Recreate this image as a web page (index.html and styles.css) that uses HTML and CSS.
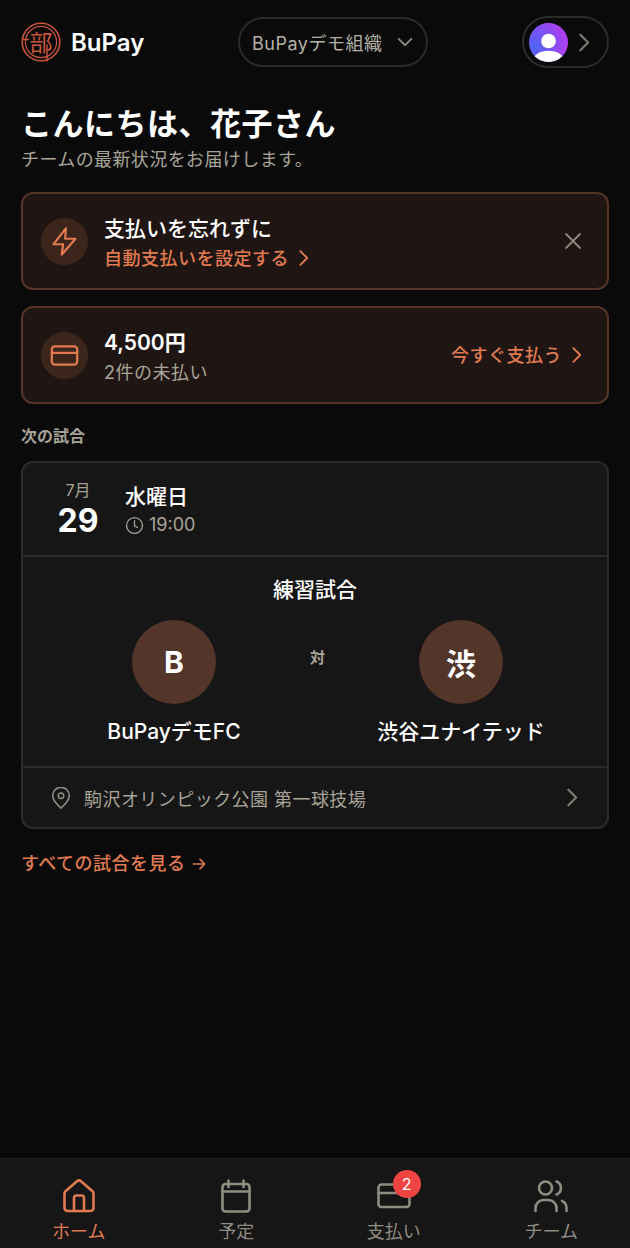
FILE: index.html
```html
<!DOCTYPE html>
<html lang="ja">
<head>
  <meta charset="UTF-8">
  <title>BuPay</title>
  <meta name="viewport" content="width=device-width, initial-scale=1.0">
  <link rel="stylesheet" href="styles.css">
</head>
<body>
  <header class="topbar">
    <div class="brand">
      <svg class="brand-seal" viewBox="0 0 40 40">
        <circle cx="20" cy="20" r="18.8"/>
        <circle cx="20" cy="20" r="15.6" stroke-width="1.2"/>
        <path d="M1.5 17.5h6M26 23v16" stroke-width="1.4"/>
        <text x="20" y="28.5" text-anchor="middle">部</text>
      </svg>
      <span class="brand-name">BuPay</span>
    </div>
    <button class="org-pill">
      <span>BuPayデモ組織</span>
      <svg class="org-caret" viewBox="0 0 24 24"><path d="M5 8.5l7 7 7-7"/></svg>
    </button>
    <button class="user-pill">
      <span class="avatar">
        <svg viewBox="0 0 40 40"><circle cx="20" cy="18.500" r="7.500" fill="#fff"/><ellipse cx="20" cy="38.500" rx="16" ry="10" fill="#fff"/></svg>
      </span>
      <svg class="chev chev-muted" viewBox="0 0 24 24"><path d="M8 4.5l7.5 7.5L8 19.5"/></svg>
    </button>
  </header>

  <main class="content">
    <section class="greeting">
      <h1>こんにちは、花子さん</h1>
      <p>チームの最新状況をお届けします。</p>
    </section>

    <!-- お知らせ -->
    <div class="notice">
      <span class="notice-icon">
        <svg class="icon-bolt" viewBox="0 0 24 24"><path d="M13 2.5L4 14h7l-1 7.5L20 10h-7.5z"/></svg>
      </span>
      <div class="notice-body">
        <strong>支払いを忘れずに</strong>
        <a class="link-accent">自動支払いを設定する<svg class="chev" viewBox="0 0 24 24"><path d="M8 4.5l7.5 7.5L8 19.5"/></svg></a>
      </div>
      <svg class="notice-close" viewBox="0 0 24 24"><path d="M4.5 4.5l15 15M19.5 4.5l-15 15"/></svg>
    </div>

    <div class="notice">
      <span class="notice-icon">
        <svg class="icon-card" viewBox="0 0 24 24"><rect x="1.5" y="4.5" width="21" height="15" rx="2.5"/><path d="M1.5 9.8h21"/></svg>
      </span>
      <div class="notice-body">
        <strong class="amount">4,500円</strong>
        <span class="notice-sub">2件の未払い</span>
      </div>
      <a class="link-accent pay-now">今すぐ支払う<svg class="chev" viewBox="0 0 24 24"><path d="M8 4.5l7.5 7.5L8 19.5"/></svg></a>
    </div>

    <h2 class="section-title">次の試合</h2>

    <div class="match-card">
      <div class="match-date">
        <div class="date-box">
          <span class="date-month">7月</span>
          <span class="date-day">29</span>
        </div>
        <div class="date-info">
          <strong>水曜日</strong>
          <span class="date-time">
            <svg viewBox="0 0 24 24"><circle cx="12" cy="12" r="10"/><path d="M12 6v6.5l3.8 2"/></svg>
            19:00
          </span>
        </div>
      </div>

      <div class="match-main">
        <h3>練習試合</h3>
        <div class="teams">
          <div class="team">
            <span class="team-badge">B</span>
            <span class="team-name">BuPayデモFC</span>
          </div>
          <span class="versus">対</span>
          <div class="team">
            <span class="team-badge">渋</span>
            <span class="team-name">渋谷ユナイテッド</span>
          </div>
        </div>
      </div>

      <div class="match-place">
        <svg class="pin" viewBox="0 0 24 24"><path d="M12 23s-9-7.600-9-13.600a9 9 0 0 1 18 0C21 15.400 12 23 12 23z"/><circle cx="12" cy="9.500" r="3"/></svg>
        <span>駒沢オリンピック公園 第一球技場</span>
        <svg class="chev chev-muted" viewBox="0 0 24 24"><path d="M8 4.5l7.5 7.5L8 19.5"/></svg>
      </div>
    </div>

    <a class="see-all">すべての試合を見る<svg viewBox="0 0 24 24"><path d="M3.5 12h17M13.5 5l7 7-7 7"/></svg></a>
  </main>

  <!-- 下部ナビ -->
  <nav class="bottom-nav">
    <a class="active">
      <svg viewBox="0 0 36 36"><path d="M3.500 15.500a3 3 0 0 1 1-2.200L16 3.300a3 3 0 0 1 4 0l11.500 10a3 3 0 0 1 1 2.200V30a3 3 0 0 1-3 3h-23a3 3 0 0 1-3-3z"/><path d="M13 33V20a2.500 2.500 0 0 1 2.500-2.500h5A2.500 2.500 0 0 1 23 20v13"/></svg>
      ホーム
    </a>
    <a>
      <svg viewBox="0 0 36 36"><rect x="4.500" y="6" width="27" height="27.500" rx="3"/><path d="M4.500 13.500h27M10.500 2.500V9M25.500 2.500V9"/></svg>
      予定
    </a>
    <a>
      <span class="nav-icon">
        <svg viewBox="0 0 36 36"><rect x="2.500" y="6.500" width="31" height="22.500" rx="3"/><path d="M2.500 15h31"/></svg>
        <span class="nav-badge">2</span>
      </span>
      支払い
    </a>
    <a>
      <svg viewBox="0 0 36 36"><circle cx="12.500" cy="10" r="6.500"/><path d="M2.500 33v-3a8 8 0 0 1 8-8h5a8 8 0 0 1 8 8v3M23.500 3.500a7 7 0 0 1 0 13M33.500 33v-3a8 8 0 0 0-4.500-7.200"/></svg>
      チーム
    </a>
  </nav>
</body>
</html>
```

FILE: styles.css
```css
* {
  box-sizing: border-box;
}
body {
  margin: 0;
  height: 1248px;
  display: flex;
  flex-direction: column;
  background: #0a0a0a;
  color: #fff;
  font-family: Inter, "Noto Sans CJK JP", sans-serif;
  overflow: hidden;
}
svg {
  fill: none;
  stroke: currentColor;
  stroke-width: 2;
  stroke-linecap: round;
  stroke-linejoin: round;
}
button {
  background: none;
  color: inherit;
  font-family: inherit;
  cursor: pointer;
}

/* ヘッダー */
.topbar {
  display: flex;
  align-items: center;
  height: 84px;
  padding: 0 21px;
}
.brand {
  display: flex;
  align-items: center;
  gap: 10px;
  width: 217px;
}
.brand-seal {
  width: 40px;
  height: 40px;
  color: #c9553c;
  stroke-width: 1.6;
}
.brand-seal text {
  fill: currentColor;
  stroke: none;
  font-size: 23px;
}
.brand-name {
  font-size: 24px;
  font-weight: 600;
}
.org-pill {
  display: flex;
  align-items: center;
  justify-content: space-between;
  width: 190px;
  height: 50px;
  padding: 0 10px 0 12px;
  border: 2px solid #2b2b29;
  border-radius: 25px;
  color: #b5b1a6;
  font-size: 18px;
  letter-spacing: 0.5px;
}
.org-caret {
  width: 22px;
  height: 22px;
  color: #8f8c82;
}
.user-pill {
  display: flex;
  align-items: center;
  gap: 4px;
  width: 87px;
  height: 52px;
  margin-left: auto;
  padding: 0 0 0 5px;
  border: 2px solid #2b2b29;
  border-radius: 26px;
}
.avatar {
  width: 39px;
  height: 39px;
  border-radius: 50%;
  overflow: hidden;
  background: radial-gradient(circle at 15% 60%, #4f63f5 0%, #7a52f3 40%, #b03ff0 80%);
}
.avatar svg {
  display: block;
  width: 100%;
  height: 100%;
  stroke: none;
}
.chev {
  width: 22px;
  height: 22px;
  flex-shrink: 0;
}
.chev-muted {
  color: #7f7c72;
  width: 25px;
  height: 25px;
}

.content {
  flex: 1;
  padding: 0 21px;
}

.greeting h1 {
  margin: 20px 0 0;
  font-size: 31px;
  line-height: 40px;
  font-weight: 700;
  letter-spacing: 0.5px;
}
.greeting p {
  margin: 4px 0 20px;
  font-size: 18px;
  line-height: 24px;
  color: #a8a498;
  letter-spacing: 0.4px;
}

/* カード */
.notice {
  display: flex;
  align-items: center;
  height: 98px;
  margin-bottom: 16px;
  padding: 0 21px 0 18px;
  background: #1f1613;
  border: 2px solid #553527;
  border-radius: 12px;
}
.notice-icon {
  display: flex;
  align-items: center;
  justify-content: center;
  width: 47px;
  height: 47px;
  margin-right: 16px;
  border-radius: 50%;
  background: #3c261c;
  color: #e07a50;
}
.icon-bolt {
  width: 33px;
  height: 33px;
  stroke-width: 1.6;
}
.icon-card {
  width: 29px;
  height: 29px;
  stroke-width: 1.9;
}
.notice-body {
  flex: 1;
  display: flex;
  flex-direction: column;
  padding-top: 3px;
}
.notice-body strong {
  margin-bottom: 2px;
  font-size: 21px;
  line-height: 29px;
  font-weight: 500;
}
.notice-body .amount {
  font-weight: 600;
}
.link-accent {
  display: inline-flex;
  align-items: center;
  gap: 4px;
  color: #e07a50;
  font-size: 18px;
  line-height: 27px;
  font-weight: 500;
  letter-spacing: 0.5px;
}
.notice-close {
  width: 22px;
  height: 22px;
  margin-right: 2px;
  color: #8f8c82;
  stroke-width: 2.2;
}
.notice-sub {
  color: #a8a498;
  font-size: 18px;
  line-height: 27px;
  letter-spacing: 0.5px;
}
.pay-now {
  margin-right: -2px;
}

.section-title {
  margin: 0;
  padding: 4px 0 13px;
  font-size: 16px;
  line-height: 24px;
  font-weight: 700;
  color: #a8a498;
}

/* 試合カード */
.match-card {
  background: #161616;
  border: 2px solid #2b2b29;
  border-radius: 12px;
}
.match-date {
  display: flex;
  align-items: center;
  height: 92px;
  padding-left: 32px;
}
.date-box {
  display: flex;
  flex-direction: column;
  align-items: center;
  width: 46px;
  margin-right: 24px;
}
.date-month {
  font-size: 16px;
  line-height: 20px;
  color: #a8a498;
}
.date-day {
  margin-top: 3px;
  font-size: 32px;
  line-height: 36px;
  font-weight: 700;
}
.date-info {
  display: flex;
  flex-direction: column;
  padding-top: 3px;
}
.date-info strong {
  margin-bottom: 1px;
  font-size: 21px;
  line-height: 28px;
  font-weight: 500;
}
.date-time {
  display: flex;
  align-items: center;
  gap: 5px;
  font-size: 18px;
  line-height: 26px;
  color: #a8a498;
}
.date-time svg {
  width: 19px;
  height: 19px;
  stroke-width: 1.6;
}
.match-main {
  height: 213px;
  border-top: 2px solid #2b2b29;
  border-bottom: 2px solid #2b2b29;
}
.match-main h3 {
  margin: 0;
  padding-top: 19px;
  text-align: center;
  font-size: 21px;
  line-height: 28px;
  font-weight: 500;
}
.teams {
  display: flex;
  margin-top: 16px;
  padding-left: 31px;
}
.team {
  display: flex;
  flex-direction: column;
  align-items: center;
  width: 240px;
}
.team-badge {
  display: flex;
  align-items: center;
  justify-content: center;
  width: 84px;
  height: 84px;
  border-radius: 50%;
  background: #54352a;
  font-size: 30px;
  font-weight: 700;
}
.team-name {
  margin-top: 14px;
  font-size: 21px;
  line-height: 28px;
  font-weight: 500;
}
.versus {
  width: 47px;
  margin-top: 27px;
  font-size: 15px;
  line-height: 22px;
  font-weight: 700;
  text-align: center;
  color: #a8a498;
}
.match-place {
  display: flex;
  align-items: center;
  height: 59px;
  padding: 0 22px 0 27px;
  font-size: 18px;
  color: #a8a498;
  letter-spacing: 0.45px;
}
.match-place span {
  flex: 1;
  margin-left: 12px;
}
.pin {
  width: 22px;
  height: 22px;
  stroke-width: 1.7;
  color: #8f8c82;
}

.see-all {
  display: inline-flex;
  align-items: center;
  gap: 5px;
  margin-top: 22px;
  color: #e07a50;
  font-size: 18px;
  line-height: 26px;
  font-weight: 500;
  letter-spacing: 0.5px;
}
.see-all svg {
  width: 16px;
  height: 16px;
  stroke-width: 2.4;
}

/* 下部ナビ */
.bottom-nav {
  display: grid;
  grid-template-columns: repeat(4, 1fr);
  height: 90px;
  background: #161616;
  border-top: 1px solid #1f1f1f;
}
.bottom-nav a {
  display: flex;
  flex-direction: column;
  align-items: center;
  padding-top: 19px;
  color: #8f8c82;
  font-size: 18px;
  line-height: 26px;
}
.bottom-nav a.active {
  color: #e07a50;
}
.bottom-nav svg {
  display: block;
  width: 36px;
  height: 36px;
  margin-bottom: 5px;
  stroke-width: 2.6;
}
.nav-icon {
  position: relative;
}
.nav-badge {
  position: absolute;
  top: -8px;
  left: 17px;
  width: 28px;
  height: 28px;
  border-radius: 50%;
  background: #ef4444;
  color: #fff;
  font-size: 16px;
  line-height: 28px;
  text-align: center;
}
```
